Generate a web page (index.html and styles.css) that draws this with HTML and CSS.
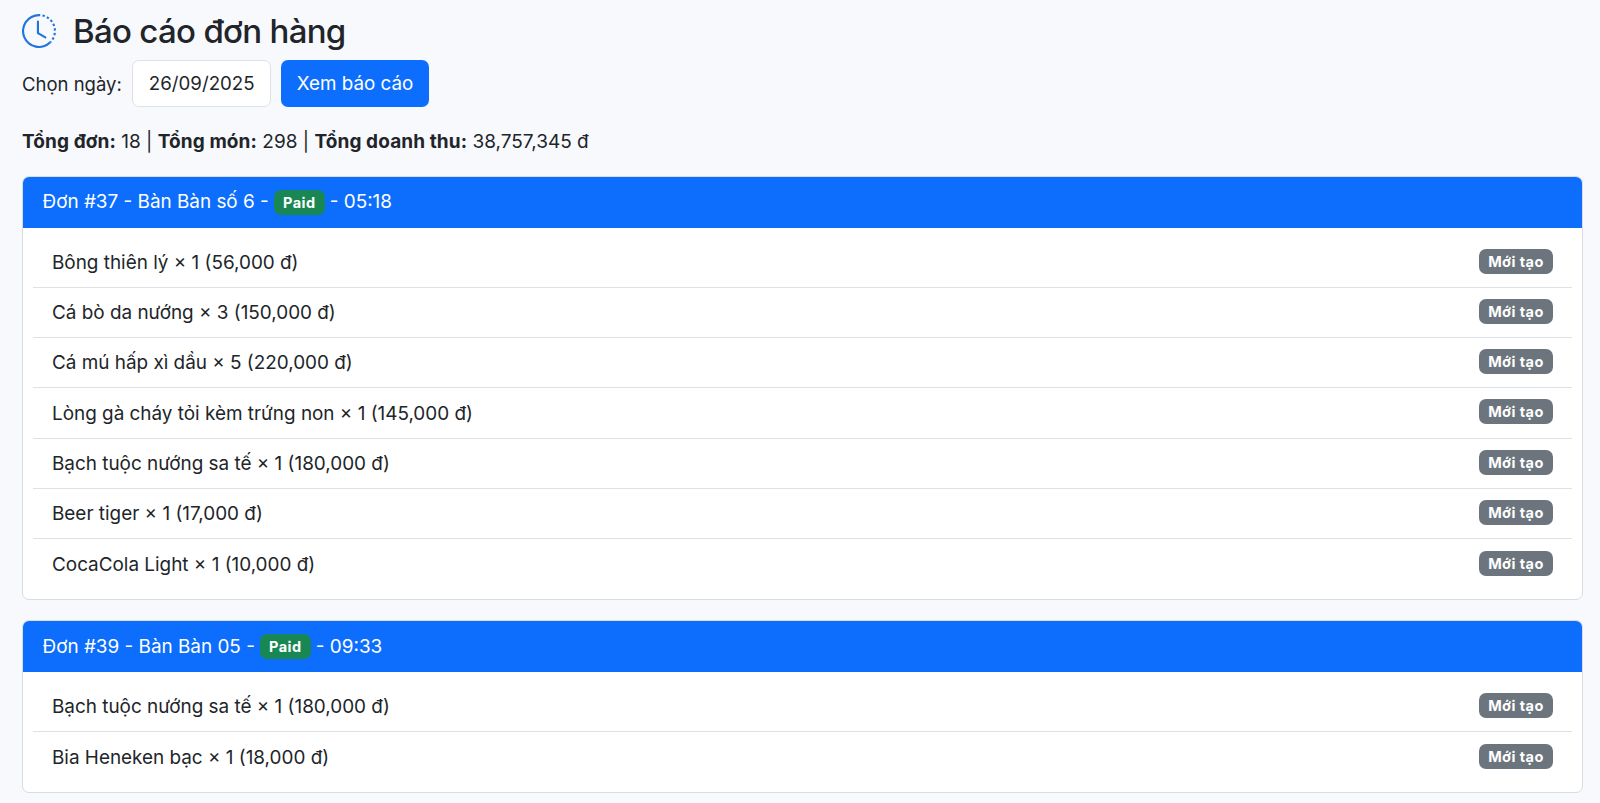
FILE: index.html
```html
<!DOCTYPE html>
<html lang="vi">
<head>
<meta charset="utf-8">
<title>Báo cáo đơn hàng</title>
<link rel="stylesheet" href="styles.css">
</head>
<body>
<main class="page">
  <h2 class="title">
    <svg class="title-icon" viewBox="0 0 16 16" fill="currentColor" aria-hidden="true">
      <path d="M8.515 1.019A7 7 0 0 0 8 1V0a8 8 0 0 1 .589.022zm2.004.45a7 7 0 0 0-.985-.299l.219-.976q.576.129 1.126.342zm1.37.71a7 7 0 0 0-.439-.27l.493-.87a8 8 0 0 1 .979.654l-.615.789a7 7 0 0 0-.418-.302zm1.834 1.79a7 7 0 0 0-.653-.796l.724-.69q.406.429.747.91zm.744 1.352a7 7 0 0 0-.214-.468l.893-.45a8 8 0 0 1 .45 1.088l-.95.313a7 7 0 0 0-.179-.483m.53 2.507a7 7 0 0 0-.1-1.025l.985-.17q.1.58.116 1.17zm-.131 1.538q.05-.254.081-.51l.993.123a8 8 0 0 1-.23 1.155l-.964-.267q.069-.247.12-.501m-.952 2.379q.276-.436.486-.908l.914.405q-.24.54-.555 1.038zm-.964 1.205q.183-.183.35-.378l.758.653a8 8 0 0 1-.401.432z"/>
      <path d="M8 1a7 7 0 1 0 4.95 11.95l.707.707A8.001 8.001 0 1 1 8 0z"/>
      <path d="M7.5 3a.5.5 0 0 1 .5.5v5.21l3.248 1.856a.5.5 0 0 1-.496.868l-3.5-2A.5.5 0 0 1 7 9V3.5a.5.5 0 0 1 .5-.5"/>
    </svg>
    <span>Báo cáo đơn hàng</span>
  </h2>

  <form class="filter">
    <label class="filter-label" for="date">Chọn ngày:</label>
    <input class="date-input" id="date" type="text" value="26/09/2025">
    <button class="btn" type="button">Xem báo cáo</button>
  </form>

  <p class="summary"><b>Tổng đơn:</b> 18 | <b>Tổng món:</b> 298 | <b>Tổng doanh thu:</b> 38,757,345 đ</p>

  <section class="card">
    <header class="card-header">Đơn #37 - Bàn Bàn số 6 - <span class="badge badge-paid">Paid</span> - 05:18</header>
    <ul class="items">
      <li class="item"><span class="item-name">Bông thiên lý × 1 (56,000 đ)</span><span class="badge badge-new">Mới tạo</span></li>
      <li class="item"><span class="item-name">Cá bò da nướng × 3 (150,000 đ)</span><span class="badge badge-new">Mới tạo</span></li>
      <li class="item"><span class="item-name">Cá mú hấp xì dầu × 5 (220,000 đ)</span><span class="badge badge-new">Mới tạo</span></li>
      <li class="item"><span class="item-name">Lòng gà cháy tỏi kèm trứng non × 1 (145,000 đ)</span><span class="badge badge-new">Mới tạo</span></li>
      <li class="item"><span class="item-name">Bạch tuộc nướng sa tế × 1 (180,000 đ)</span><span class="badge badge-new">Mới tạo</span></li>
      <li class="item"><span class="item-name">Beer tiger × 1 (17,000 đ)</span><span class="badge badge-new">Mới tạo</span></li>
      <li class="item"><span class="item-name">CocaCola Light × 1 (10,000 đ)</span><span class="badge badge-new">Mới tạo</span></li>
    </ul>
  </section>

  <section class="card">
    <header class="card-header">Đơn #39 - Bàn Bàn 05 - <span class="badge badge-paid">Paid</span> - 09:33</header>
    <ul class="items">
      <li class="item"><span class="item-name">Bạch tuộc nướng sa tế × 1 (180,000 đ)</span><span class="badge badge-new">Mới tạo</span></li>
      <li class="item"><span class="item-name">Bia Heneken bạc × 1 (18,000 đ)</span><span class="badge badge-new">Mới tạo</span></li>
    </ul>
  </section>
</main>
</body>
</html>
```
FILE: styles.css
```css
* { box-sizing: border-box; }

html, body { height: 100%; }

body {
  margin: 0;
  background: #f8f9fd;
  color: #212529;
  font-family: Inter, "Noto Sans", sans-serif;
  font-size: 19px;
  line-height: 1.5;
  overflow: hidden;
}

.page { padding: 12px 17px 0 22px; }

.title {
  display: flex;
  align-items: center;
  gap: 17px;
  margin: 0 0 10px;
  font-size: 33px;
  font-weight: 500;
  letter-spacing: -0.7px;
  line-height: 38px;
}

.title-icon { width: 34px; height: 34px; color: #1f74e0; flex: none; }

.filter { display: flex; align-items: center; gap: 10px; margin-bottom: 21px; }

.filter-label { padding-top: 2px; font-size: 18.5px; }

.date-input {
  width: 139px;
  height: 47px;
  padding: 0 16px;
  border: 1px solid #dee2e6;
  border-radius: 7px;
  background: #fff;
  color: #212529;
  font: inherit;
  font-size: 18.7px;
}

.btn {
  height: 47px;
  padding: 2px 16px 0;
  border: 0;
  border-radius: 7px;
  background: #0d6efd;
  color: #fff;
  font: inherit;
  font-size: 18.8px;
}

.summary { margin: 0 0 19px; }

.summary b { letter-spacing: 0.1px; }

.card {
  margin-bottom: 20px;
  border: 1px solid #d9dce0;
  border-radius: 7px;
  background: #fff;
  overflow: hidden;
}

.card-header {
  display: flex;
  align-items: center;
  gap: 5px;
  height: 51px;
  padding: 1px 19.5px 0;
  background: #0d6efd;
  color: #fff;
  font-size: 18.9px;
}

.items { margin: 0; padding: 10px 10px 9.5px; list-style: none; }

.item {
  display: flex;
  align-items: center;
  justify-content: space-between;
  height: 50.25px;
  padding: 0 19px;
  border-bottom: 1px solid #dee2e6;
  font-size: 18.9px;
}

.item:last-child { border-bottom: 0; }

.item-name { padding-top: 2px; }

.badge {
  display: inline-block;
  padding: 0 9.25px;
  height: 25px;
  border-radius: 7px;
  color: #fff;
  font-size: 14.5px;
  font-weight: 700;
  letter-spacing: 0.45px;
  line-height: 25px;
}

.badge-paid { background: #198754; }
.badge-new { margin-bottom: 2px; background: #6c757d; }
```
